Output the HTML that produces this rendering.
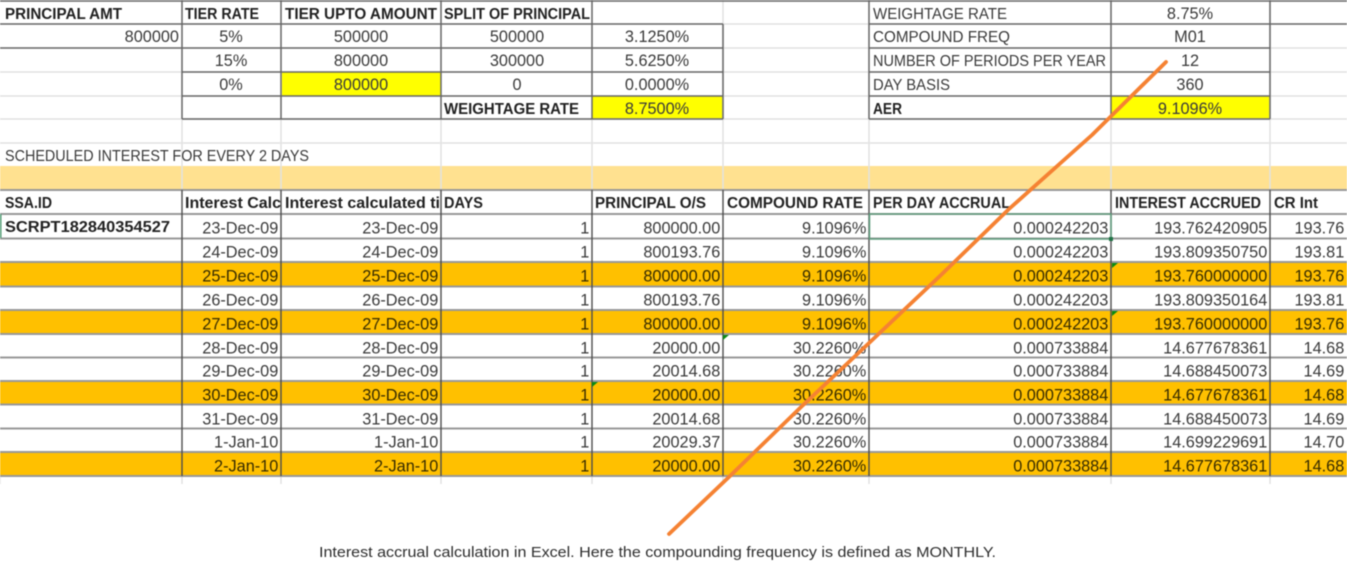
<!DOCTYPE html>
<html lang="en">
<head>
<meta charset="utf-8">
<title>Interest accrual calculation</title>
<style>
html,body{margin:0;padding:0;background:#fff;width:1347px;height:568px;overflow:hidden}
svg{display:block;filter:blur(.6px)}
text{font-family:"Liberation Sans",sans-serif;font-size:16.3px;fill:#3a3a3a}
.b{font-weight:700;fill:#222;font-size:15.8px}
.h{fill:#3a3a3a;font-size:15.8px}
.c{text-anchor:middle}
.e{text-anchor:end}
.o text{fill:#362b00}
.d{stroke:#666;stroke-width:1.5;fill:none}
.m{stroke:#999;stroke-width:2;fill:none}
.l{stroke:#e2e2e2;stroke-width:1.5;fill:none}
.k{stroke:#4d4d4d;stroke-width:1.4;fill:none}
text.cap{font-size:14.4px;fill:#2e2e2e}
</style>
</head>
<body>
<svg width="1347" height="568" viewBox="0 0 1347 568" xmlns="http://www.w3.org/2000/svg">
<rect width="1347" height="568" fill="#fff"/>

<!-- fills -->
<rect x="0" y="166" width="1347" height="24" fill="#FFE190"/>
<rect x="282" y="72" width="159" height="24" fill="#FFFF00"/>
<rect x="592" y="96" width="131" height="23" fill="#FFFF00"/>
<rect x="1111" y="96" width="159" height="23" fill="#FFFF00"/>
<rect x="0" y="262" width="1347" height="24" fill="#FFC000"/>
<rect x="0" y="310" width="1347" height="24" fill="#FFC000"/>
<rect x="0" y="381" width="1347" height="23.500" fill="#FFC000"/>
<rect x="0" y="452" width="1347" height="24" fill="#FFC000"/>

<!-- light grid -->
<path class="l" d="M0 72H182M0 96H182M0 119H1347M0 143H1347M723 24H869M723 48H869M723 72H869M723 96H869M1270 48H1347M1270 72H1347M1270 96H1347M182 119V190M281 119V190M441 119V190M592 119V190M723 0V190M869 119V190M1111 119V190M1270 0V190M182 476V484M281 476V484M441 476V484M592 476V484M723 476V484M869 476V484M1111 476V484M1270 476V484M0 476V484"/>

<!-- upper tables -->
<path class="d" d="M0 1H1347M0 24H723M0 48H723M182 72H723M182 96H723M182 119H723M182 0V119M281 0V119M441 0V119M592 0V119M723 24V119"/>
<path class="d" d="M869 24H1347M869 48H1270M869 72H1270M869 96H1270M869 119H1270M869 0V119M1111 0V119M1270 0V119"/>

<!-- lower table lines -->
<path class="m" d="M0 190H1347M0 214H1347M0 238.500H1347M0 262H1347M0 286.500H1347M0 310H1347M0 334H1347M0 357.500H1347M0 381H1347M0 404.500H1347M0 428.500H1347M0 452H1347M0 476H1347"/>
<path class="k" d="M182 190V476M281 190V476M441 190V476M592 190V476M723 190V476M869 190V476M1111 190V476M1270 190V476"/>
<path d="M869.500 214H1111V239H869.500Z" fill="none" stroke="#5f9d7d" stroke-width="1.500"/>
<rect x="1109" y="237" width="4" height="4" fill="#217346"/>
<rect x="0" y="214" width="1.500" height="24" fill="#4f9a72"/>
<path d="M1112 263h6l-6 5zM1112 311h6l-6 5zM723 335h6l-6 5zM592 382h6l-6 5z" fill="#0a8a12"/>

<!-- upper left text -->
<text class="b" x="5" y="19" textLength="117" lengthAdjust="spacingAndGlyphs">PRINCIPAL AMT</text>
<text class="b" x="185" y="19" textLength="74" lengthAdjust="spacingAndGlyphs">TIER RATE</text>
<text class="b" x="285" y="19" textLength="152" lengthAdjust="spacingAndGlyphs">TIER UPTO AMOUNT</text>
<text class="b" x="444" y="19" textLength="146" lengthAdjust="spacingAndGlyphs">SPLIT OF PRINCIPAL</text>
<text class="e" x="179" y="42">800000</text>
<text class="c" x="231" y="42">5%</text>
<text class="c" x="231" y="66">15%</text>
<text class="c" x="231" y="90">0%</text>
<text class="c" x="361" y="42">500000</text>
<text class="c" x="361" y="66">800000</text>
<text class="c" x="361" y="90">800000</text>
<text class="c" x="517" y="42">500000</text>
<text class="c" x="517" y="66">300000</text>
<text class="c" x="517" y="90">0</text>
<text class="c" x="657" y="42">3.1250%</text>
<text class="c" x="657" y="66">5.6250%</text>
<text class="c" x="657" y="90">0.0000%</text>
<text class="c" x="657" y="114">8.7500%</text>
<text class="b" x="444" y="114" textLength="135" lengthAdjust="spacingAndGlyphs">WEIGHTAGE RATE</text>

<!-- upper right text -->
<text class="h" x="873" y="19" textLength="134" lengthAdjust="spacingAndGlyphs">WEIGHTAGE RATE</text>
<text class="h" x="873" y="42" textLength="137" lengthAdjust="spacingAndGlyphs">COMPOUND FREQ</text>
<text class="h" x="873" y="66" textLength="233" lengthAdjust="spacingAndGlyphs">NUMBER OF PERIODS PER YEAR</text>
<text class="h" x="873" y="90" textLength="77" lengthAdjust="spacingAndGlyphs">DAY BASIS</text>
<text class="b" x="873" y="114" textLength="29" lengthAdjust="spacingAndGlyphs">AER</text>
<text class="c" x="1190" y="19">8.75%</text>
<text class="c" x="1190" y="42">M01</text>
<text class="c" x="1190" y="66">12</text>
<text class="c" x="1190" y="90">360</text>
<text class="c" x="1190" y="114">9.1096%</text>

<text class="h" x="5" y="161" textLength="304" lengthAdjust="spacingAndGlyphs">SCHEDULED INTEREST FOR EVERY 2 DAYS</text>

<!-- lower headers -->
<text class="b" x="5" y="208" textLength="47" lengthAdjust="spacingAndGlyphs">SSA.ID</text>
<text class="b" x="185" y="208" textLength="96" lengthAdjust="spacingAndGlyphs">Interest Calc</text>
<text class="b" x="285" y="208" textLength="155" lengthAdjust="spacingAndGlyphs">Interest calculated ti</text>
<text class="b" x="444" y="208" textLength="39" lengthAdjust="spacingAndGlyphs">DAYS</text>
<text class="b" x="595" y="208" textLength="111" lengthAdjust="spacingAndGlyphs">PRINCIPAL O/S</text>
<text class="b" x="727" y="208" textLength="136" lengthAdjust="spacingAndGlyphs">COMPOUND RATE</text>
<text class="b" x="873" y="208" textLength="137" lengthAdjust="spacingAndGlyphs">PER DAY ACCRUAL</text>
<text class="b" x="1115" y="208" textLength="146" lengthAdjust="spacingAndGlyphs">INTEREST ACCRUED</text>
<text class="b" x="1274" y="208" textLength="44" lengthAdjust="spacingAndGlyphs">CR Int</text>
<text class="b" x="5" y="232" textLength="165" lengthAdjust="spacingAndGlyphs">SCRPT182840354527</text>

<!-- rows -->
<g transform="translate(-0.7 0.5)">
<g><text class="e" x="279" y="233">23-Dec-09</text><text class="e" x="439" y="233">23-Dec-09</text><text class="e" x="590" y="233">1</text><text class="e" x="721" y="233">800000.00</text><text class="e" x="867" y="233">9.1096%</text><text class="e" x="1109" y="233">0.000242203</text><text class="e" x="1268" y="233">193.762420905</text><text class="e" x="1345" y="233">193.76</text></g>
<g><text class="e" x="279" y="257">24-Dec-09</text><text class="e" x="439" y="257">24-Dec-09</text><text class="e" x="590" y="257">1</text><text class="e" x="721" y="257">800193.76</text><text class="e" x="867" y="257">9.1096%</text><text class="e" x="1109" y="257">0.000242203</text><text class="e" x="1268" y="257">193.809350750</text><text class="e" x="1345" y="257">193.81</text></g>
<g class="o"><text class="e" x="279" y="281">25-Dec-09</text><text class="e" x="439" y="281">25-Dec-09</text><text class="e" x="590" y="281">1</text><text class="e" x="721" y="281">800000.00</text><text class="e" x="867" y="281">9.1096%</text><text class="e" x="1109" y="281">0.000242203</text><text class="e" x="1268" y="281">193.760000000</text><text class="e" x="1345" y="281">193.76</text></g>
<g><text class="e" x="279" y="305">26-Dec-09</text><text class="e" x="439" y="305">26-Dec-09</text><text class="e" x="590" y="305">1</text><text class="e" x="721" y="305">800193.76</text><text class="e" x="867" y="305">9.1096%</text><text class="e" x="1109" y="305">0.000242203</text><text class="e" x="1268" y="305">193.809350164</text><text class="e" x="1345" y="305">193.81</text></g>
<g class="o"><text class="e" x="279" y="329">27-Dec-09</text><text class="e" x="439" y="329">27-Dec-09</text><text class="e" x="590" y="329">1</text><text class="e" x="721" y="329">800000.00</text><text class="e" x="867" y="329">9.1096%</text><text class="e" x="1109" y="329">0.000242203</text><text class="e" x="1268" y="329">193.760000000</text><text class="e" x="1345" y="329">193.76</text></g>
<g><text class="e" x="279" y="353">28-Dec-09</text><text class="e" x="439" y="353">28-Dec-09</text><text class="e" x="590" y="353">1</text><text class="e" x="721" y="353">20000.00</text><text class="e" x="867" y="353">30.2260%</text><text class="e" x="1109" y="353">0.000733884</text><text class="e" x="1268" y="353">14.677678361</text><text class="e" x="1345" y="353">14.68</text></g>
<g><text class="e" x="279" y="376">29-Dec-09</text><text class="e" x="439" y="376">29-Dec-09</text><text class="e" x="590" y="376">1</text><text class="e" x="721" y="376">20014.68</text><text class="e" x="867" y="376">30.2260%</text><text class="e" x="1109" y="376">0.000733884</text><text class="e" x="1268" y="376">14.688450073</text><text class="e" x="1345" y="376">14.69</text></g>
<g class="o"><text class="e" x="279" y="400">30-Dec-09</text><text class="e" x="439" y="400">30-Dec-09</text><text class="e" x="590" y="400">1</text><text class="e" x="721" y="400">20000.00</text><text class="e" x="867" y="400">30.2260%</text><text class="e" x="1109" y="400">0.000733884</text><text class="e" x="1268" y="400">14.677678361</text><text class="e" x="1345" y="400">14.68</text></g>
<g><text class="e" x="279" y="424">31-Dec-09</text><text class="e" x="439" y="424">31-Dec-09</text><text class="e" x="590" y="424">1</text><text class="e" x="721" y="424">20014.68</text><text class="e" x="867" y="424">30.2260%</text><text class="e" x="1109" y="424">0.000733884</text><text class="e" x="1268" y="424">14.688450073</text><text class="e" x="1345" y="424">14.69</text></g>
<g><text class="e" x="279" y="447">1-Jan-10</text><text class="e" x="439" y="447">1-Jan-10</text><text class="e" x="590" y="447">1</text><text class="e" x="721" y="447">20029.37</text><text class="e" x="867" y="447">30.2260%</text><text class="e" x="1109" y="447">0.000733884</text><text class="e" x="1268" y="447">14.699229691</text><text class="e" x="1345" y="447">14.70</text></g>
<g class="o"><text class="e" x="279" y="471">2-Jan-10</text><text class="e" x="439" y="471">2-Jan-10</text><text class="e" x="590" y="471">1</text><text class="e" x="721" y="471">20000.00</text><text class="e" x="867" y="471">30.2260%</text><text class="e" x="1109" y="471">0.000733884</text><text class="e" x="1268" y="471">14.677678361</text><text class="e" x="1345" y="471">14.68</text></g>
</g>

<!-- arrow line -->
<path d="M1166 62L1092 135L1009 209L941 275L868 344L800 408L730 476L669 534" fill="none" stroke="#F58233" stroke-width="3.800" stroke-linecap="round" stroke-linejoin="round"/>

<text class="cap" x="319" y="557" textLength="677" lengthAdjust="spacingAndGlyphs">Interest accrual calculation in Excel. Here the compounding frequency is defined as MONTHLY.</text>
</svg>
</body>
</html>
